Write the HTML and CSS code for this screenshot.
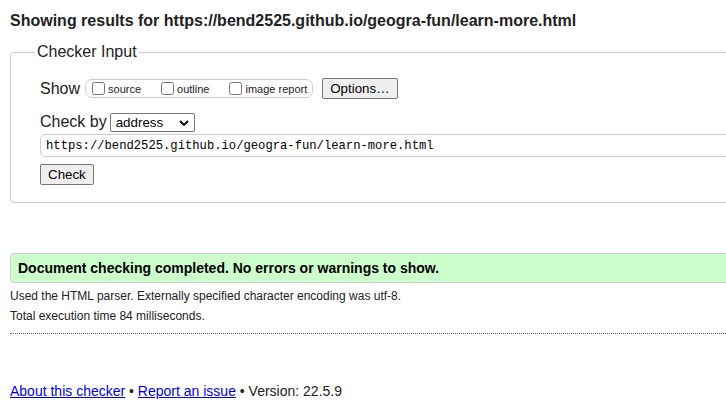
FILE: index.html
```html
<!DOCTYPE html>
<html lang="en">
<head>
<meta charset="utf-8">
<title>Nu Html Checker</title>
<link rel="stylesheet" href="styles.css">
</head>
<body>
<div class="page">
  <h2 class="title">Showing results for https://bend2525.github.io/geogra-fun/learn-more.html</h2>
  <form class="checker-form">
    <fieldset class="input-box">
      <legend class="legend">Checker Input</legend>
      <div class="row show-row">
        <span class="lbl">Show</span>
        <span class="opts">
          <label class="opt"><input type="checkbox" class="cb"><span>source</span></label>
          <label class="opt"><input type="checkbox" class="cb"><span>outline</span></label>
          <label class="opt"><input type="checkbox" class="cb"><span>image report</span></label>
        </span>
        <button type="button" class="btn options-btn">Options…</button>
      </div>
      <div class="row by-row">
        <span class="lbl">Check by</span>
        <span class="sel-wrap">
          <select class="sel"><option>address</option></select>
          <svg class="chev" width="10" height="6" viewBox="0 0 10 6"><path d="M1 1 L5 5 L9 1" fill="none" stroke="#000" stroke-width="1.8"/></svg>
        </span>
      </div>
      <input class="url" type="text" value="https://bend2525.github.io/geogra-fun/learn-more.html">
      <div class="row check-row">
        <button type="button" class="btn check-btn">Check</button>
      </div>
    </fieldset>
  </form>
  <div class="success">Document checking completed. No errors or warnings to show.</div>
  <p class="details first">Used the HTML parser. Externally specified character encoding was utf-8.</p>
  <p class="details">Total execution time 84 milliseconds.</p>
  <hr class="dots">
  <p class="footer"><a href="#">About this checker</a> • <a href="#">Report an issue</a> • Version: 22.5.9</p>
</div>
</body>
</html>
```
FILE: styles.css
```css
html {
  overflow: hidden;
}
body {
  margin: 0;
  padding: 0 0 0 10px;
  font-family: "Liberation Sans", Arial, sans-serif;
  color: #222;
  background: #fff;
}
.page {
  width: 900px;
}
.title {
  margin: 11px 0 0;
  font-size: 16px;
  line-height: 20px;
  font-weight: bold;
  color: #222;
}
.checker-form {
  margin: 0;
}
.input-box {
  margin: 10px 0 0;
  padding: 0 0 17px 29px;
  border: 1px solid #ccc;
  border-radius: 4px;
}
.legend {
  font-size: 16px;
  line-height: 22px;
  padding: 0 2px;
  margin-left: -5px;
}
.row {
  display: flex;
  align-items: center;
}
.show-row {
  margin-top: 15px;
  height: 21px;
}
.lbl {
  font-size: 16px;
}
.opts {
  display: inline-flex;
  align-items: center;
  gap: 20px;
  margin-left: 5px;
  padding: 0 5px 0 6px;
  height: 17px;
  border: 1px solid #ccc;
  border-radius: 7px;
}
.opt {
  display: inline-flex;
  align-items: center;
  gap: 3px;
  font-size: 11px;
  color: #222;
}
.cb {
  margin: 0;
  width: 13px;
  height: 13px;
}
.btn {
  font-family: "Liberation Sans", Arial, sans-serif;
  font-size: 13.33px;
  color: #000;
  background: #efefef;
  border: 1px solid #767676;
  border-radius: 2px;
  padding: 0 7px;
  height: 21px;
}
.options-btn {
  margin-left: 9px;
}
.by-row {
  margin-top: 13px;
  height: 20px;
}
.sel-wrap {
  position: relative;
  display: inline-block;
  margin-left: 3px;
  height: 19px;
}
.sel {
  appearance: none;
  -webkit-appearance: none;
  font-family: "Liberation Sans", Arial, sans-serif;
  font-size: 13.33px;
  color: #000;
  background: #fff;
  border: 1px solid #767676;
  border-radius: 2px;
  width: 85px;
  height: 19px;
  padding: 0 0 0 5px;
  margin: 0;
}
.chev {
  position: absolute;
  left: 69px;
  top: 7px;
  pointer-events: none;
}
.url {
  display: block;
  box-sizing: border-box;
  margin: 2px 0 0;
  width: 900px;
  height: 23px;
  padding: 0 5px;
  font-family: "Liberation Mono", "DejaVu Sans Mono", monospace;
  font-size: 12.2px;
  color: #000;
  border: 1px solid #ccc;
  border-radius: 5px;
}
.check-row {
  margin-top: 7px;
}
.success {
  margin-top: 50px;
  box-sizing: border-box;
  height: 30px;
  padding: 0 0 0 7px;
  display: flex;
  align-items: center;
  font-size: 14px;
  font-weight: bold;
  color: #000;
  background: #cfc;
  border: 1px solid #ccc;
  border-radius: 4px;
}
.details {
  margin: 4px 0 0;
  font-size: 12px;
  line-height: 16px;
  color: #222;
}
.details.first {
  margin-top: 5px;
}
.dots {
  margin: 9px 0 0;
  height: 0;
  border: 0;
  border-top: 1px dotted #666;
}
.footer {
  margin: 48px 0 0;
  font-size: 14px;
  line-height: 18px;
  color: #222;
}
.footer a {
  color: #00e;
}
```
